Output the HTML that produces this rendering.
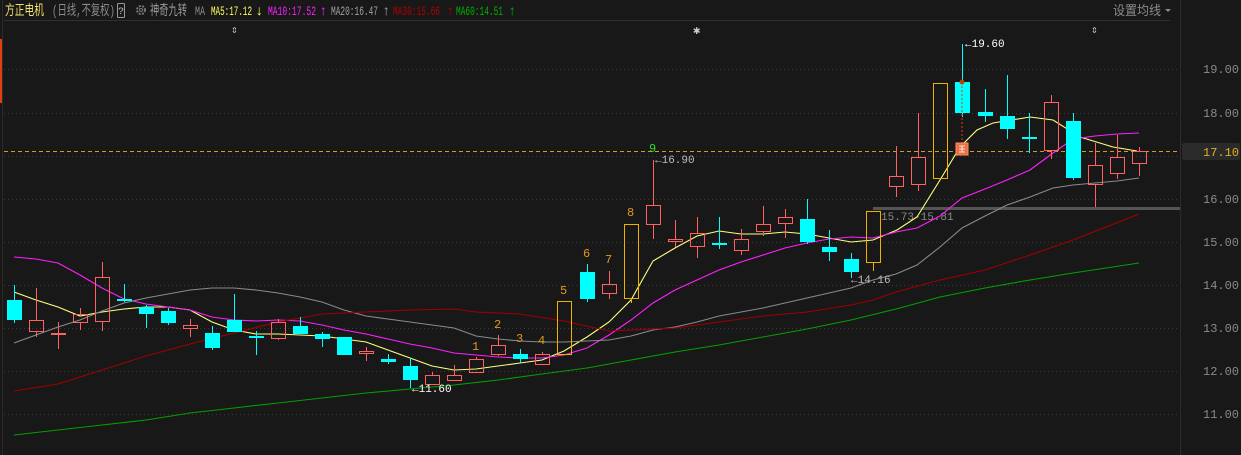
<!DOCTYPE html>
<html><head><meta charset="utf-8"><style>
html,body{margin:0;padding:0;background:#181818;width:1241px;height:455px;overflow:hidden}
svg{display:block}
text{font-family:"Liberation Mono","Noto Sans CJK SC",monospace}
</style></head><body>
<svg id="s" width="1241" height="455" xmlns="http://www.w3.org/2000/svg">
<rect width="1241" height="455" fill="#181818"/>
<line x1="2.5" y1="0" x2="2.5" y2="455" stroke="#2a2a2a"/>
<rect x="0" y="39" width="2" height="64" fill="#e04010"/>
<line x1="1180.5" y1="0" x2="1180.5" y2="455" stroke="#2c2c2c"/>
<line x1="4" y1="20.5" x2="1170" y2="20.5" stroke="#303030"/>
<g id="grid" stroke="#3a3a3a" stroke-dasharray="1,3"></g>
<g font-size="14">
<text x="5" y="15" fill="#f0e070" textLength="39" lengthAdjust="spacingAndGlyphs" font-family="Liberation Sans, Noto Sans CJK SC, sans-serif">方正电机</text>
<text x="52" y="15" fill="#8a8a8a" textLength="63" lengthAdjust="spacingAndGlyphs" font-family="Liberation Sans, Noto Sans CJK SC, sans-serif">(日线,不复权)</text>
<rect x="117.5" y="3.5" width="7" height="14" fill="none" stroke="#999" rx="1"/>
<text x="118" y="14" fill="#bbb" font-size="10" font-family="Liberation Sans, sans-serif">?</text>
<circle cx="141" cy="10" r="4" fill="none" stroke="#777" stroke-width="2" stroke-dasharray="2,1.3"/>
<circle cx="141" cy="10" r="1.5" fill="none" stroke="#777"/>
<text x="150" y="15" fill="#9a9a9a" textLength="37" lengthAdjust="spacingAndGlyphs" font-family="Liberation Sans, Noto Sans CJK SC, sans-serif">神奇九转</text>
</g>
<g font-size="13">
<text x="195" y="15" fill="#8a8a8a" textLength="10" lengthAdjust="spacingAndGlyphs">MA</text>
<text x="211" y="15" fill="#ffff60" textLength="41" lengthAdjust="spacingAndGlyphs">MA5:17.12</text>
<text x="255" y="15" fill="#ffff60" font-size="14">↓</text>
<text x="268" y="15" fill="#ff20ff" textLength="48" lengthAdjust="spacingAndGlyphs">MA10:17.52</text>
<text x="319" y="15" fill="#ff20ff" font-size="14">↑</text>
<text x="331" y="15" fill="#a0a0a0" textLength="47" lengthAdjust="spacingAndGlyphs">MA20:16.47</text>
<text x="382" y="15" fill="#a0a0a0" font-size="14">↑</text>
<text x="393" y="15" fill="#b00000" textLength="47" lengthAdjust="spacingAndGlyphs">MA30:15.66</text>
<text x="446" y="15" fill="#b00000" font-size="14">↑</text>
<text x="456" y="15" fill="#00b000" textLength="47" lengthAdjust="spacingAndGlyphs">MA60:14.51</text>
<text x="508" y="15" fill="#00b000" font-size="14">↑</text>
</g>
<text x="1113" y="15" fill="#8a8a8a" font-size="13" textLength="48" lengthAdjust="spacingAndGlyphs" font-family="Liberation Sans, Noto Sans CJK SC, sans-serif">设置均线</text>
<path d="M1165 9 L1171 9 L1168 12 Z" fill="#888"/>
<text x="231" y="33" fill="#ccc" font-size="11">⇕</text>
<text x="693" y="34" fill="#ccc" font-size="12">✱</text>
<text x="1091" y="33" fill="#ccc" font-size="11">⇕</text>
<g id="axis" font-size="12" fill="#8a8a8a"></g>
<rect x="873" y="207" width="307" height="3" fill="#555"/>
<text x="881" y="220" fill="#8a8a8a" font-size="11">15.73-15.81</text>
<line x1="4" y1="151.5" x2="1180" y2="151.5" stroke="#c8a020" stroke-dasharray="4,3"/>
<g id="ma" fill="none"></g>
<g id="c"></g>
<g font-size="12" fill="#e09820" font-family="Liberation Sans, sans-serif">
<text x="472" y="350">1</text><text x="494" y="328">2</text><text x="516" y="342">3</text><text x="538" y="344">4</text>
<text x="560" y="294">5</text><text x="583" y="257">6</text><text x="605" y="263">7</text><text x="627" y="216">8</text>
<text x="649" y="152" fill="#30e030">9</text>
</g>
<g font-size="11" fill="#bbb">
<text x="412" y="392" fill="#fff">←11.60</text>
<text x="655" y="163">←16.90</text>
<text x="851" y="283">←14.16</text>
<text x="965" y="47" fill="#fff">←19.60</text>
</g>
<line x1="962" y1="82" x2="962" y2="146" stroke="#e04010" stroke-dasharray="2,2"/>
<circle cx="962" cy="82" r="2.5" fill="#c04000"/>
<rect x="956" y="143" width="12" height="12" fill="#e87040" stroke="#ff9060"/>
<path d="M959 146h6M959 149h6M959 152h6M962 146v6" stroke="#fff" stroke-width="0.8"/>
<rect x="1182" y="143" width="58" height="17" fill="#2a2a2a" rx="2"/>
<text x="1203" y="156" fill="#e0b020" font-size="12">17.10</text>
</svg>
<script>
var ns="http://www.w3.org/2000/svg";
function el(p,t,a,txt){var e=document.createElementNS(ns,t);for(var k in a)e.setAttribute(k,a[k]);if(txt)e.textContent=txt;p.appendChild(e);return e;}
var g=document.getElementById('grid'),ax=document.getElementById('axis');
var lv=[["19.00",69],["18.00",113],["17.00",156],["16.00",199],["15.00",242],["14.00",285],["13.00",328],["12.00",371],["11.00",414]];
lv.forEach(function(l){el(g,'line',{x1:4,y1:l[1]+.5,x2:1180,y2:l[1]+.5});if(l[0]!="17.00")el(ax,'text',{x:1203,y:l[1]+4},l[0]);});
var R="#ff6060",C="#00ffff",O="#f0b000";
var cs=[[14,300,320,285,323,C,1],[36,320,332,288,337,R,0],[58,333,335,322,349,R,0],[80,314,323,308,330,R,0],[102,277,322,262,331,R,0],
[124,300,301,284,302,C,1],[146,307,314,305,328,C,1],[168,311,323,308,325,C,1],[190,325,329,319,337,R,0],[212,333,348,326,350,C,1],
[234,320,332,294,332,C,1],[256,337,337,331,355,C,1],[278,322,339,319,340,R,0],[300,326,334,317,334,C,1],[322,334,339,332,347,C,1],
[344,337,355,337,355,C,1],[366,351,354,347,361,R,0],[388,359,362,354,364,C,1],[410,366,380,358,388,C,1],[432,375,385,372,385,R,0],
[454,375,381,365,381,R,0],[476,359,373,357,373,R,0],[498,345,355,335,356,R,0],[520,354,359,349,363,C,1],[542,354,365,352,365,R,0],
[564,301,355,301,355,O,0],[587,272,299,264,302,C,1],[609,284,294,271,299,R,0],[631,224,299,224,303,O,0],[653,205,225,160,239,R,0],
[675,239,242,220,247,R,0],[697,233,247,217,258,R,0],[719,243,245,217,249,C,1],[741,239,251,229,255,R,0],[763,224,232,206,236,R,0],
[785,217,224,209,238,R,0],[807,219,242,199,244,C,1],[829,247,252,230,261,C,1],[851,259,272,253,278,C,1],[873,211,263,211,271,O,0],
[896,176,187,146,197,R,0],[918,157,185,113,191,R,0],[940,83,179,83,179,O,0],[962,82,113,44,117,C,1],[985,112,116,89,122,C,1],
[1007,116,129,75,139,C,1],[1029,138,138,113,153,C,1],[1051,102,151,95,159,R,0],[1073,121,178,113,180,C,1],[1095,165,185,143,207,R,0],
[1117,157,174,135,179,R,0],[1139,151,164,147,176,R,0]];
var cg=document.getElementById('c');
cs.forEach(function(c){var x=c[0];
 if(c[3]<c[1])el(cg,'line',{x1:x+.5,y1:c[3],x2:x+.5,y2:c[1],stroke:c[5]});
 if(c[4]>c[2])el(cg,'line',{x1:x+.5,y1:c[2],x2:x+.5,y2:c[4],stroke:c[5]});
 var h=c[2]-c[1];
 if(h<2){el(cg,'rect',{x:x-7,y:c[1]-1,width:15,height:2,fill:c[5]});}
 else if(c[6])el(cg,'rect',{x:x-7,y:c[1],width:15,height:h,fill:c[5]});
 else el(cg,'rect',{x:x-6.5,y:c[1]+.5,width:14,height:h-1,fill:'none',stroke:c[5]});
});
var mg=document.getElementById('ma');
function pl(pts,col){el(mg,'polyline',{points:pts,stroke:col,'stroke-width':1.1});}
pl("14,292 36,300 58,307 80,316 102,312 124,309 146,307 168,307 190,310 212,322 234,330 256,334 278,334 300,335 322,336 344,339 366,342 388,350 410,358 432,366 454,370 476,369 498,366 520,363 542,360 564,351 587,337 609,322 631,300 653,261 675,248 697,236 719,231 741,234 763,234 785,232 807,234 829,238 851,242 873,240 897,230 917,217 940,180 960,147 977,130 993,123 1030,117 1053,120 1080,137 1113,147 1137,151","#ffff80");
pl("14,257 36,259 58,263 80,275 102,288 124,299 146,304 168,307 190,310 212,317 234,320 256,321 278,320 300,321 322,325 344,330 366,334 388,339 410,344 432,348 454,353 476,355 498,357 520,358 542,358 564,355 587,348 609,335 631,320 653,303 675,290 697,280 719,270 741,262 763,255 785,248 807,243 829,239 851,237 873,238 896,232 917,228 940,216 962,198 985,189 1007,180 1030,170 1053,153 1073,139 1095,136 1117,134 1139,133","#ff20ff");
pl("14,343 36,335 58,327 80,320 102,311 124,303 146,298 168,294 190,290 212,288 234,288 256,290 278,293 300,297 322,302 344,310 366,316 388,319 410,322 432,325 454,328 476,336 498,339 520,341 542,342 564,342 587,341 609,340 631,336 653,330 675,327 697,322 719,316 741,312 763,308 785,303 807,298 829,293 851,288 873,280 896,274 917,265 940,247 962,228 985,216 1007,205 1030,197 1053,188 1073,185 1095,183 1117,181 1139,178","#8a8a8a");
pl("14,391 58,384 102,370 146,356 190,344 234,333 278,322 322,314 366,312 410,310 454,309 476,312 520,314 564,321 609,331 631,330 675,328 719,322 763,316 807,312 851,305 873,300 896,292 940,280 985,270 1030,255 1073,240 1139,214","#a00000");
pl("14,435 58,430 102,425 146,420 190,413 234,408 278,403 322,398 366,393 410,389 454,385 498,380 542,374 587,368 631,360 675,352 719,345 763,337 807,329 851,320 896,309 940,297 985,288 1030,280 1073,273 1139,263","#00a000");
</script>
</body></html>
